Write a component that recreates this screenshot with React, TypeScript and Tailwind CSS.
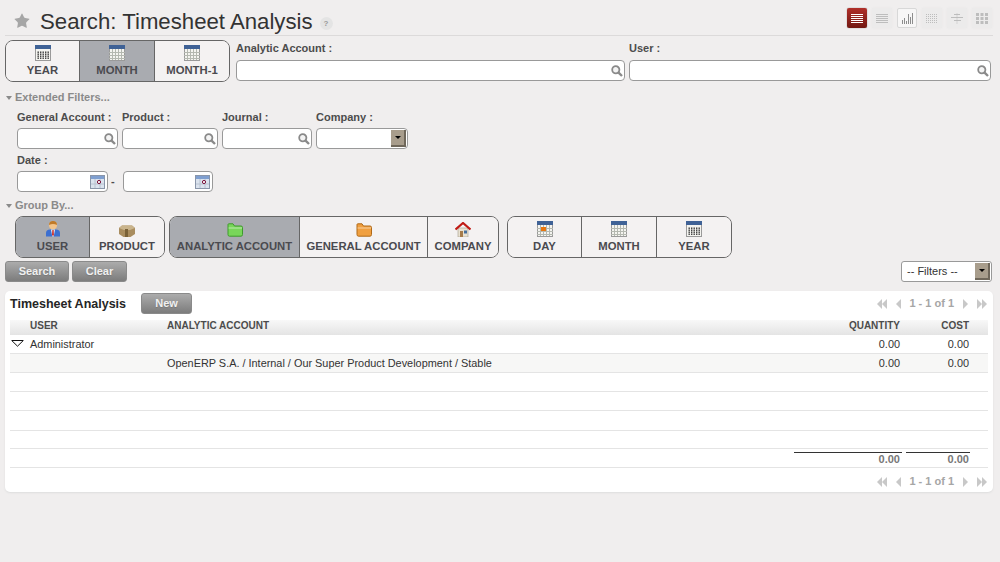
import { Star } from "lucide-react"

const font = "font-['Liberation_Sans',Arial,sans-serif]"

function CalendarIcon({ kind }: { kind: "year" | "month" | "day" }) {
  const cols = [2.5, 5, 7.5, 10, 12.5]
  const rows = kind === "year" ? [6.5, 8.5, 10.5, 12.5] : [7, 10, 13]
  return (
    <svg width="16" height="16" viewBox="0 0 16 16" className="block">
      <rect x="0.5" y="0.5" width="15" height="15" fill="#f4f4f0" stroke="#9a9a9a" />
      <rect x="0" y="0" width="16" height="4" fill="#3f6296" />
      {kind === "year"
        ? rows.map((y) => cols.map((x) => <rect key={`${x}-${y}`} x={x} y={y} width="1.4" height="1.4" fill="#333" />))
        : null}
      {kind !== "year" && (
        <>
          {[3, 6, 9, 12].map((x) => (
            <line key={x} x1={x + 0.5} y1="4" x2={x + 0.5} y2="15" stroke="#b4b8b0" />
          ))}
          {rows.map((y) => (
            <line key={y} x1="0" y1={y + 0.5} x2="16" y2={y + 0.5} stroke="#b4b8b0" />
          ))}
        </>
      )}
      {kind === "day" && <rect x="4" y="6" width="5" height="4" fill="#e8760f" />}
    </svg>
  )
}

function FolderIcon({ fill, dark }: { fill: string; dark: string }) {
  return (
    <svg width="16" height="14" viewBox="0 0 16 14" className="block">
      <path d="M1 3 V1.5 Q1 .8 2 .8 H6 L7.5 3 H14 Q15.5 3 15.5 4.5 V11.5 Q15.5 13.2 14 13.2 H2.5 Q1 13.2 1 11.5 Z" fill={fill} stroke={dark} />
      <path d="M1.5 5 H15" stroke="#ffffff" strokeOpacity="0.5" />
    </svg>
  )
}

function UserIcon() {
  return (
    <svg width="16" height="16" viewBox="0 0 16 16" className="block">
      <path d="M1 15.5 V12 Q1 8.5 5 8.5 H11 Q15 8.5 15 12 V15.5 Z" fill="#3c6fd0" />
      <path d="M6 8.5 H10 L8.7 15.5 H7.3 Z" fill="#f4f4f4" />
      <path d="M7.4 9 H8.6 L8.9 14 L8 15 L7.1 14 Z" fill="#c8201c" />
      <circle cx="8" cy="4.2" r="4" fill="#f3c48a" />
      <path d="M4 4 A4 4 0 0 1 12 4 Q8 2 4 4 Z" fill="#c07a28" />
    </svg>
  )
}

function BoxIcon() {
  return (
    <svg width="16" height="12" viewBox="0 0 16 12" className="block">
      <path d="M0 3 L3 .5 H13 L16 3 V9 L11.5 12 H4.5 L0 9 Z" fill="#a98d5f" />
      <path d="M0 3 L5 5 H11 L16 3 L13 .5 H3 Z" fill="#c9b48c" />
      <rect x="6" y="4" width="3" height="8" fill="#7a6238" />
    </svg>
  )
}

function HomeIcon() {
  return (
    <svg width="16" height="15" viewBox="0 0 16 15" className="block">
      <rect x="3" y="6" width="10" height="9" fill="#e9e2d2" stroke="#a29a88" strokeWidth="0.6" />
      <path d="M.5 7.5 L8 1 L15.5 7.5" fill="none" stroke="#c01a14" strokeWidth="2.2" />
      <rect x="5" y="9" width="3" height="6" fill="#a67c4a" />
      <rect x="9" y="8.5" width="3" height="3" fill="#48709c" />
    </svg>
  )
}

function LensIcon() {
  return (
    <svg width="12" height="12" viewBox="0 0 12 12" className="block">
      <circle cx="4.8" cy="4.8" r="3.6" fill="#f4f4f4" stroke="#8a8a8a" strokeWidth="1.8" />
      <line x1="7.6" y1="7.6" x2="11" y2="11" stroke="#8a8a8a" strokeWidth="2.4" />
    </svg>
  )
}

function Toggle({ label, icon, active, className }: { label: string; icon: React.ReactNode; active?: boolean; className: string }) {
  return (
    <div className={`flex flex-col items-center pt-[4px] border-[#666] ${active ? "bg-[#a9abb0]" : "bg-[#f4f2f2]"} ${className}`}>
      <div className="h-[16px] flex items-end justify-center">{icon}</div>
      <div className="mt-[3px] text-[11.3px] leading-[13px] font-bold text-[#4a4a4f] whitespace-nowrap">{label}</div>
    </div>
  )
}

function ToggleGroup({ children, className }: { children: React.ReactNode; className?: string }) {
  return <div className={`flex h-[42px] rounded-[8px] border border-[#666] overflow-hidden ${className ?? ""}`}>{children}</div>
}

function Label({ text, className }: { text: string; className?: string }) {
  return <div className={`text-[11px] leading-[13px] font-bold text-[#4c4c4c] whitespace-pre ${className ?? ""}`}>{text}</div>
}

function SearchInput({ className }: { className: string }) {
  return (
    <div className={`h-[21px] rounded-[4px] border border-[#999] bg-white flex items-center justify-end pr-[1px] ${className}`}>
      <LensIcon />
    </div>
  )
}

function DateInput({ className }: { className: string }) {
  return (
    <div className={`h-[21px] rounded-[4px] border border-[#999] bg-white flex items-center justify-end pr-[2px] ${className}`}>
      <svg width="15" height="14" viewBox="0 0 15 14">
        <rect x="0.5" y="0.5" width="14" height="13" fill="#dbe3ee" stroke="#8a96aa" />
        <rect x="1" y="1" width="13" height="3" fill="#7f9fd0" />
        <path d="M1 9 H14 M5 4 V13 M10 4 V13" stroke="#b8c2d0" />
        <circle cx="9" cy="7" r="1.6" fill="#fff" stroke="#7a1038" />
      </svg>
    </div>
  )
}

function SelectArrow() {
  return (
    <div className="w-[15px] h-[17px] bg-[#a89d8c] border-r-2 border-b-2 border-[#6f675a] flex items-center justify-center">
      <div className="w-0 h-0 border-x-[3px] border-x-transparent border-t-[3px] border-t-black" />
    </div>
  )
}

function GrayButton({ label, className }: { label: string; className: string }) {
  return (
    <div className={`h-[21px] rounded-[3px] border border-[#8a8a8a] bg-gradient-to-b from-[#acacac] to-[#7c7c7c] flex items-center justify-center text-[11px] font-bold text-[#f0f0f0] [text-shadow:0_1px_1px_#777777] ${className}`}>
      {label}
    </div>
  )
}

function ViewIcon({ kind, active, raised }: { kind: string; active?: boolean; raised?: boolean }) {
  const stroke = active ? "#fff" : raised ? "#8d8d8d" : "#bdbdbd"
  return (
    <div className={`w-[20px] h-[20px] flex items-center justify-center rounded-[2px] ${active ? "bg-gradient-to-b from-[#b0302a] to-[#731812] shadow-[0_0_1px_#555]" : raised ? "bg-[#f7f6f6] border border-[#d8d8d8]" : "bg-[#ecebeb] shadow-[0_0_2px_#e6e4e4]"}`}>
      <svg width="12" height="11" viewBox="0 0 12 11">
        {kind === "list" && [1.5, 3.5, 5.5, 7.5, 9.5].map((y) => <line key={y} x1="0" x2="12" y1={y} y2={y} stroke={stroke} />)}
        {kind === "bars" && [[1, 7], [3, 5], [5, 8], [7, 1], [9, 4], [11, 0]].map(([x, y]) => <line key={x} x1={x + 0.5} x2={x + 0.5} y1={y} y2="11" stroke={stroke} />)}
        {kind === "cal" && [1, 3, 5, 7, 9].map((y) => <line key={y} x1="0" x2="12" y1={y + 0.5} y2={y + 0.5} stroke={stroke} strokeDasharray="1 1" />)}
        {kind === "gantt" && (
          <>
            <line x1="3" x2="9" y1="1.5" y2="1.5" stroke={stroke} />
            <line x1="0" x2="12" y1="4.5" y2="4.5" stroke={stroke} />
            <line x1="3" x2="10" y1="7.5" y2="7.5" stroke={stroke} />
            <line x1="6" x2="6" y1="0" y2="11" stroke={stroke} strokeOpacity="0.5" />
          </>
        )}
        {kind === "grid" && [0, 4.5, 9].map((x) => [0, 4, 8].map((y) => <rect key={`${x}${y}`} x={x} y={y} width="3" height="3" fill={stroke} />))}
      </svg>
    </div>
  )
}

function Pager({ className }: { className?: string }) {
  const tri = "w-0 h-0 border-y-[5px] border-y-transparent"
  const l = `${tri} border-r-[5px] border-r-[#c8c8c8]`
  const r = `${tri} border-l-[5px] border-l-[#c8c8c8]`
  return (
    <div className={`flex items-center justify-end text-[11px] font-bold text-[#a6a6a6] ${className ?? ""}`}>
      <span className={l} />
      <span className={l} />
      <span className={`${l} ml-[9px]`} />
      <span className="ml-[8px] mr-[9px] leading-[13px]">1 - 1 of 1</span>
      <span className={r} />
      <span className={`${r} ml-[9px]`} />
      <span className={r} />
    </div>
  )
}

function Row({ user, account, qty, cost, tint, arrow, h }: { user?: string; account?: string; qty?: string; cost?: string; tint?: boolean; arrow?: boolean; h: string }) {
  return (
    <div className={`grid grid-cols-[20px_137px_1fr_65px_69px_19px] items-center border-b border-[#e4e4e4] text-[10.9px] text-[#333] ${h} ${tint ? "bg-[#f7f7f6]" : "bg-white"}`}>
      <div className="flex justify-end pr-[6px]">
        {arrow && (
          <svg width="13" height="7" viewBox="0 0 13 7" className="mt-[-1px]">
            <path d="M.7 .5 H12.3 L6.5 6.2 Z" fill="none" stroke="#111" />
          </svg>
        )}
      </div>
      <div>{user}</div>
      <div>{account}</div>
      <div className="text-right">{qty}</div>
      <div className="text-right">{cost}</div>
      <div />
    </div>
  )
}

export default function App() {
  return (
    <div className={`${font} w-[1000px] h-[562px] bg-[#f0eeee] overflow-hidden`}>
      <div className="mx-[5px] w-[988px] h-[36px] border-b border-[#dcdada] flex items-start">
        <Star size={18} fill="#a6a6a6" strokeWidth={0} className="ml-[8px] mt-[12px]" />
        <h1 className="ml-[9px] mt-[9px] text-[22.2px] leading-[26px] text-[#333]">Search: Timesheet Analysis</h1>
        <div className="ml-[7px] mt-[17px] w-[13px] h-[13px] rounded-full bg-[#e4e4e4] text-[8px] leading-[13px] text-center font-bold text-[#999]">?</div>
        <div className="ml-auto mr-[1px] mt-[8px] flex gap-[5px]">
          <ViewIcon kind="list" active />
          <ViewIcon kind="list" />
          <ViewIcon kind="bars" raised />
          <ViewIcon kind="cal" />
          <ViewIcon kind="gantt" />
          <ViewIcon kind="grid" />
        </div>
      </div>

      <div className="flex pl-[5px] pt-[4px]">
        <ToggleGroup className="w-[225px]">
          <Toggle label="YEAR" icon={<CalendarIcon kind="year" />} className="w-[74px] border-r" />
          <Toggle label="MONTH" icon={<CalendarIcon kind="month" />} active className="w-[75px] border-r" />
          <Toggle label="MONTH-1" icon={<CalendarIcon kind="month" />} className="flex-1" />
        </ToggleGroup>
        <div className="ml-[6px] w-[389px]">
          <Label text="Analytic Account :" className="mt-[2px]" />
          <SearchInput className="mt-[5px] w-full" />
        </div>
        <div className="ml-[4px] w-[362px]">
          <Label text="User :" className="mt-[2px]" />
          <SearchInput className="mt-[5px] w-full" />
        </div>
      </div>

      <div className="mt-[9px] ml-[6px] flex items-center text-[11px] leading-[13px] font-bold text-[#8a8a8a]">
        <span className="w-0 h-0 mr-[3px] border-x-[3px] border-x-transparent border-t-[4px] border-t-[#8a8a8a]" />
        Extended Filters...
      </div>

      <div className="ml-[17px] mt-[7px] flex">
        <div className="w-[105px]">
          <Label text="General Account :" />
          <SearchInput className="mt-[4px] w-[101px]" />
        </div>
        <div className="w-[100px]">
          <Label text="Product :" />
          <SearchInput className="mt-[4px] w-[96px]" />
        </div>
        <div className="w-[94px]">
          <Label text="Journal :" />
          <SearchInput className="mt-[4px] w-[90px]" />
        </div>
        <div className="w-[92px]">
          <Label text="Company :" />
          <div className="mt-[4px] h-[21px] rounded-[4px] border border-[#999] bg-white flex items-center justify-end pr-[1px]">
            <SelectArrow />
          </div>
        </div>
      </div>

      <div className="ml-[17px] mt-[5px]">
        <Label text="Date :" />
        <div className="mt-[4px] flex items-center">
          <DateInput className="w-[91px]" />
          <span className="w-[15px] pl-[3px] text-[11px] font-bold text-[#4c4c4c]">-</span>
          <DateInput className="w-[90px]" />
        </div>
      </div>

      <div className="mt-[7px] ml-[6px] flex items-center text-[11px] leading-[13px] font-bold text-[#8a8a8a]">
        <span className="w-0 h-0 mr-[3px] border-x-[3px] border-x-transparent border-t-[4px] border-t-[#8a8a8a]" />
        Group By...
      </div>

      <div className="ml-[15px] mt-[4px] flex">
        <ToggleGroup className="w-[150px]">
          <Toggle label="USER" icon={<UserIcon />} active className="w-[74px] border-r" />
          <Toggle label="PRODUCT" icon={<BoxIcon />} className="flex-1" />
        </ToggleGroup>
        <ToggleGroup className="ml-[4px] w-[330px]">
          <Toggle label="ANALYTIC ACCOUNT" icon={<FolderIcon fill="#79d65a" dark="#3f9a2c" />} active className="w-[130px] border-r" />
          <Toggle label="GENERAL ACCOUNT" icon={<FolderIcon fill="#f0a040" dark="#b06a18" />} className="w-[128px] border-r" />
          <Toggle label="COMPANY" icon={<HomeIcon />} className="flex-1" />
        </ToggleGroup>
        <ToggleGroup className="ml-[8px] w-[225px]">
          <Toggle label="DAY" icon={<CalendarIcon kind="day" />} className="w-[74px] border-r" />
          <Toggle label="MONTH" icon={<CalendarIcon kind="month" />} className="w-[75px] border-r" />
          <Toggle label="YEAR" icon={<CalendarIcon kind="year" />} className="flex-1" />
        </ToggleGroup>
      </div>

      <div className="ml-[5px] mt-[3px] flex">
        <GrayButton label="Search" className="w-[64px]" />
        <GrayButton label="Clear" className="ml-[3px] w-[55px]" />
        <div className="ml-auto mr-[8px] w-[91px] h-[21px] rounded-[3px] border border-[#999] bg-white flex items-center justify-between pl-[5px] pr-[1px] text-[11px] text-[#333]">
          -- Filters --
          <SelectArrow />
        </div>
      </div>

      <div className="ml-[5px] mt-[9px] w-[988px] h-[201px] rounded-[5px] bg-white shadow-[0_1px_2px_#dddddd] px-[5px]">
        <div className="h-[29px] flex items-start">
          <div className="mt-[6px] text-[12.5px] leading-[15px] font-bold text-[#252525] w-[131px]">Timesheet Analysis</div>
          <GrayButton label="New" className="mt-[2px] w-[51px]" />
          <Pager className="ml-auto mt-[6px] mr-[1px]" />
        </div>
        <div className="grid grid-cols-[20px_137px_1fr_65px_69px_19px] h-[15px] items-start bg-gradient-to-b from-[#f8f8f8] to-[#e4e4e4] text-[10px] leading-[12px] font-bold text-[#4c4c4c]">
          <div />
          <div>USER</div>
          <div>ANALYTIC ACCOUNT</div>
          <div className="text-right">QUANTITY</div>
          <div className="text-right">COST</div>
          <div />
        </div>
        <Row user="Administrator" qty="0.00" cost="0.00" arrow h="h-[19px]" />
        <Row account="OpenERP S.A. / Internal / Our Super Product Development / Stable" qty="0.00" cost="0.00" tint h="h-[19px]" />
        <Row h="h-[19px]" />
        <Row h="h-[19px]" />
        <Row h="h-[20px]" />
        <Row h="h-[18px]" />
        <div className="grid grid-cols-[1fr_108px_4px_64px_18px] h-[19px] border-b border-[#e4e4e4] text-[11px] font-bold text-[#777]">
          <div />
          <div className="mt-[3px] border-t border-[#333] h-[15px] text-right pr-[2px] leading-[13px]">0.00</div>
          <div />
          <div className="mt-[3px] border-t border-[#333] h-[15px] text-right leading-[13px] pr-[1px]">0.00</div>
          <div />
        </div>
        <Pager className="mt-[7px] mr-[1px]" />
      </div>
    </div>
  )
}
